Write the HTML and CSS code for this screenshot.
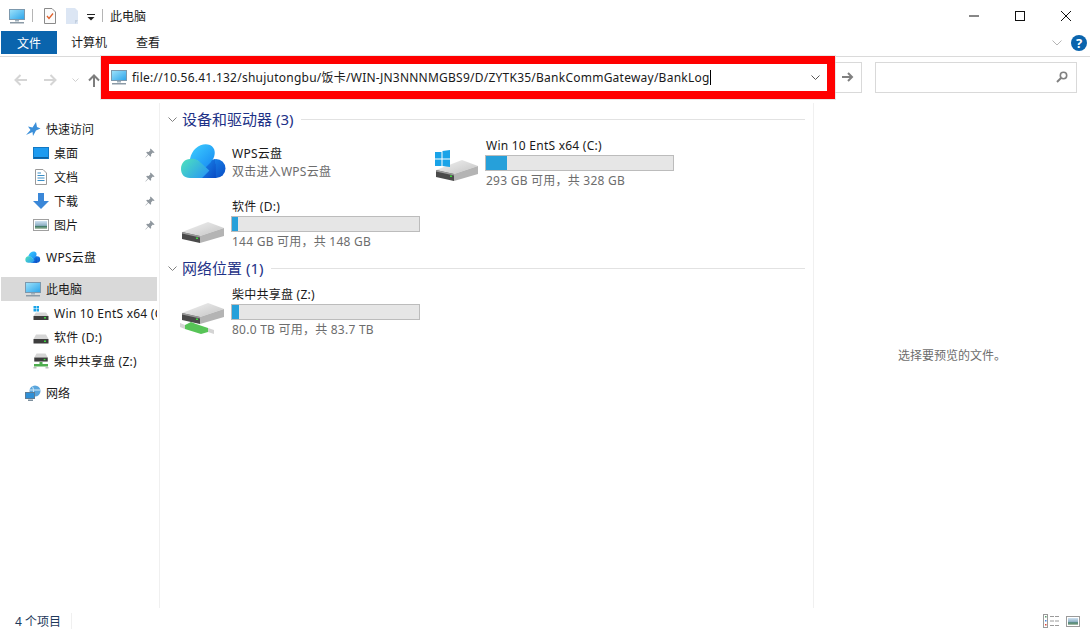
FILE: index.html
```html
<!DOCTYPE html>
<html lang="zh-CN">

<head>
    <meta charset="UTF-8">
    <meta name="viewport" content="width=device-width, initial-scale=1.0">
    <title>此电脑</title>
    <link rel="stylesheet" href="styles.css">
</head>

<body>

    <svg class="svg-defs" aria-hidden="true">
        <defs>
            <linearGradient id="screenGrad" x1="0" y1="0" x2="1" y2="1">
                <stop offset="0" stop-color="#9fe3fb" />
                <stop offset="1" stop-color="#2aa3ea" />
            </linearGradient>
            <linearGradient id="driveTop" x1="0" y1="0" x2="1" y2="1">
                <stop offset="0" stop-color="#f2f2f2" />
                <stop offset="1" stop-color="#c4c4c4" />
            </linearGradient>
            <linearGradient id="cloudTop" x1="0" y1="0" x2="1" y2="1">
                <stop offset="0" stop-color="#3fd0ff" />
                <stop offset="1" stop-color="#1688f2" />
            </linearGradient>
            <linearGradient id="cloudLeft" x1="0" y1="0" x2="1" y2="0.6">
                <stop offset="0" stop-color="#4fe3bb" />
                <stop offset="1" stop-color="#2a9cf0" />
            </linearGradient>
            <linearGradient id="cloudRight" x1="0" y1="0" x2="1" y2="1">
                <stop offset="0" stop-color="#1a8cf0" />
                <stop offset="1" stop-color="#0a4cc4" />
            </linearGradient>
            <linearGradient id="photoGrad" x1="0" y1="0" x2="0" y2="1">
                <stop offset="0" stop-color="#cfe2f2" />
                <stop offset="0.55" stop-color="#8fb0c4" />
                <stop offset="0.7" stop-color="#3f7a62" />
                <stop offset="1" stop-color="#b9c9b5" />
            </linearGradient>
        </defs>
        <symbol id="computer" viewBox="0 0 16 16">
            <rect x="0.500" y="1.500" width="15" height="10" fill="url(#screenGrad)" stroke="#7c98ad" />
            <rect x="6" y="12" width="4" height="1.500" fill="#9fb0bc" />
            <rect x="1" y="14" width="14" height="1.500" fill="#8b9aa6" />
        </symbol>
        <symbol id="pin" viewBox="0 0 10 10">
            <path d="M5.600 0.400 9.600 4.400 8.600 5 7.800 4.600 6 6.400 6.200 8 5.400 8.800 3.400 6.800 0.800 9.600 0.400 9.200 3 6.400 1.200 4.600 2 3.800 3.600 4 5.400 2.200 5 1.400Z" fill="#8f979e" />
        </symbol>
        <symbol id="cloud" viewBox="0 0 54 58">
            <circle cx="38" cy="34.500" r="9.500" fill="url(#cloudRight)" />
            <path d="M20 44 38 44 38 30 30 26Z" fill="url(#cloudRight)" />
            <path d="M12 25C14 14 24 8 32 11 38 14 38 21 34 27L27 34 20 27Z" fill="url(#cloudTop)" />
            <path d="M12 25C17 24 20 26 23 29L33 38 27 44 12 44C6 44 3 40 3 35 3 29 7 25 12 25Z" fill="url(#cloudLeft)" />
            <path d="M33 27 37 25 37 44 24 44 31 37C34 34 35 30 33 27Z" fill="url(#cloudRight)" />
        </symbol>
        <symbol id="drive" viewBox="0 0 54 58">
            <path d="M4 37 30 27 46 33 22 41Z" fill="url(#driveTop)" />
            <path d="M22 41 46 33 46 41 22 48Z" fill="#b4b4b4" />
            <path d="M4 37 22 41 22 48 4 44Z" fill="#4a4a4a" />
            <path d="M4 37 22 41 22 42.500 4 38.500Z" fill="#9a9a9a" />
            <rect x="18" y="42.500" width="2" height="1.500" fill="#3fd63f" />
        </symbol>
        <symbol id="driveSmall" viewBox="0 0 16 10">
            <path d="M3 0.500H13L15.500 5H0.500Z" fill="#d5d5d5" />
            <rect x="0.500" y="5" width="15" height="4.500" fill="#3d3d3d" />
            <rect x="11" y="6.500" width="2" height="1.500" fill="#3fd63f" />
        </symbol>
    </svg>

    <div class="window">

        <div class="titlebar">
            <svg class="qa-computer"><use href="#computer" /></svg>
            <span class="qa-sep"></span>
            <svg class="qa-doc" viewBox="0 0 12 16">
                <path d="M0.500 0.500H8L11.500 4V15.500H0.500Z" fill="#fbfbfb" stroke="#8a8a8a" />
                <path d="M3 8 5 10.500 9 5.500" fill="none" stroke="#e0602a" stroke-width="1.300" />
            </svg>
            <svg class="qa-blank" viewBox="0 0 12 16">
                <path d="M0 0H9L12 3V16H0Z" fill="#dce6f4" />
                <path d="M9 12H12L9 16Z" fill="#c3cfdf" />
            </svg>
            <svg class="qa-drop" viewBox="0 0 8 7">
                <rect x="0" y="0" width="8" height="1" fill="#222" />
                <path d="M0.500 3H7.500L4 6.500Z" fill="#222" />
            </svg>
            <span class="qa-sep qa-sep-2"></span>
            <span class="window-title">此电脑</span>
            <div class="winbtns">
                <svg viewBox="0 0 10 10"><path d="M0 5H10" stroke="#111" /></svg>
                <svg viewBox="0 0 10 10"><rect x="0.500" y="0.500" width="9" height="9" fill="none" stroke="#111" /></svg>
                <svg viewBox="0 0 10 10"><path d="M0 0 10 10M10 0 0 10" stroke="#111" /></svg>
            </div>
        </div>

        <div class="ribbon">
            <span class="tab tab-file">文件</span>
            <span class="tab tab-computer">计算机</span>
            <span class="tab tab-view">查看</span>
            <svg class="ribbon-chevron" viewBox="0 0 10 6"><path d="M0.500 0.500 5 5 9.500 0.500" fill="none" stroke="#b5b5b5" /></svg>
            <span class="help">?</span>
        </div>

        <div class="navbar">
            <svg class="nav-icon nav-back" viewBox="0 0 13 12"><path d="M13 6H1.500M6.500 1 1.500 6 6.500 11" fill="none" stroke="#d5d5d5" stroke-width="2" /></svg>
            <svg class="nav-icon nav-forward" viewBox="0 0 13 12"><path d="M0 6H11.500M6.500 1 11.500 6 6.500 11" fill="none" stroke="#d5d5d5" stroke-width="2" /></svg>
            <svg class="nav-icon nav-chevron" viewBox="0 0 7 4"><path d="M0.500 0.500 3.500 3.500 6.500 0.500" fill="none" stroke="#cfcfcf" /></svg>
            <svg class="nav-icon nav-up" viewBox="0 0 12 13"><path d="M6 13V1.500M1 6.500 6 1.500 11 6.500" fill="none" stroke="#7d7d7d" stroke-width="2" /></svg>

            <div class="address">
                <svg class="address-icon"><use href="#computer" /></svg>
                <span class="address-text">file://10.56.41.132/shujutongbu/饭卡/WIN-JN3NNNMGBS9/D/ZYTK35/BankCommGateway/BankLog</span>
                <span class="caret"></span>
                <svg class="address-drop" viewBox="0 0 9 5"><path d="M0.500 0.500 4.500 4.500 8.500 0.500" fill="none" stroke="#555" /></svg>
            </div>

            <div class="go">
                <svg viewBox="0 0 12 10"><path d="M0 5H10M6 1 10 5 6 9" fill="none" stroke="#808080" stroke-width="2" /></svg>
            </div>

            <div class="search">
                <svg viewBox="0 0 12 12">
                    <circle cx="7.500" cy="4.500" r="3.200" fill="none" stroke="#808080" stroke-width="1.600" />
                    <path d="M5 7 1 11" stroke="#808080" stroke-width="2" />
                </svg>
            </div>
        </div>

        <div class="body">

            <nav class="sidebar">
                <div class="side-group">
                    <div class="side-row">
                        <svg class="side-icon" viewBox="0 0 16 16"><path d="M11 1 12 6 15.500 7.500 11 9.500 8 15 7.500 11 1 14 5.500 9 3 5.500 7.500 6.500Z" fill="#3b8fd9" /></svg>
                        <span>快速访问</span>
                    </div>
                    <div class="side-row side-child">
                        <svg class="side-icon" viewBox="0 0 16 16">
                            <rect x="0.500" y="2.500" width="15" height="11" fill="#1e9bf0" stroke="#1278c4" />
                            <rect x="1" y="12" width="14" height="1.500" fill="#0d5f9e" />
                        </svg>
                        <span>桌面</span>
                        <svg class="pin"><use href="#pin" /></svg>
                    </div>
                    <div class="side-row side-child">
                        <svg class="side-icon" viewBox="0 0 16 16">
                            <path d="M2.500 0.500H10L13.500 4V15.500H2.500Z" fill="#fff" stroke="#9a9a9a" />
                            <path d="M4.500 4H8M4.500 6.500H11.500M4.500 9H11.500M4.500 11.500H11.500" stroke="#3a8fc8" />
                        </svg>
                        <span>文档</span>
                        <svg class="pin"><use href="#pin" /></svg>
                    </div>
                    <div class="side-row side-child">
                        <svg class="side-icon" viewBox="0 0 16 16"><path d="M5 0H11V8H16L8 16 0 8H5Z" fill="#3a87d8" /></svg>
                        <span>下载</span>
                        <svg class="pin"><use href="#pin" /></svg>
                    </div>
                    <div class="side-row side-child">
                        <svg class="side-icon" viewBox="0 0 16 16">
                            <rect x="0.500" y="2.500" width="15" height="11" fill="#fff" stroke="#a0a0a0" />
                            <rect x="2" y="4" width="12" height="8" fill="url(#photoGrad)" />
                        </svg>
                        <span>图片</span>
                        <svg class="pin"><use href="#pin" /></svg>
                    </div>
                </div>

                <div class="side-group">
                    <div class="side-row">
                        <svg class="side-icon" viewBox="2 6 48 42"><use href="#cloud" width="54" height="58" /></svg>
                        <span class="latin">WPS云盘</span>
                    </div>
                </div>

                <div class="side-group">
                    <div class="side-row side-active">
                        <svg class="side-icon"><use href="#computer" /></svg>
                        <span>此电脑</span>
                    </div>
                    <div class="side-row side-child">
                        <svg class="side-icon" viewBox="0 0 16 16">
                            <path d="M0.500 1H3V3.500H0.500ZM3.500 1H6V3.500H3.500ZM0.500 4H3V6.500H0.500ZM3.500 4H6V6.500H3.500Z" fill="#19a3e8" />
                            <path d="M3 7.500H13L15.500 11H0.500Z" fill="#d5d5d5" />
                            <rect x="0.500" y="11" width="15" height="4" fill="#3d3d3d" />
                            <rect x="11" y="12" width="2" height="1.500" fill="#3fd63f" />
                        </svg>
                        <span class="latin">Win 10 EntS x64 (C:)</span>
                    </div>
                    <div class="side-row side-child">
                        <svg class="side-icon" viewBox="0 -5 16 16"><use href="#driveSmall" width="16" height="10" /></svg>
                        <span class="latin">软件 (D:)</span>
                    </div>
                    <div class="side-row side-child">
                        <svg class="side-icon" viewBox="0 0 16 16">
                            <use href="#driveSmall" width="16" height="9" />
                            <path d="M6.500 9H9.500V11H15V13.500H1V11H6.500Z" fill="#4fae4f" />
                            <rect x="0.500" y="14" width="3" height="1.500" fill="#bdbdbd" />
                            <rect x="12.500" y="14" width="3" height="1.500" fill="#bdbdbd" />
                        </svg>
                        <span class="latin">柴中共享盘 (Z:)</span>
                    </div>
                </div>

                <div class="side-group">
                    <div class="side-row">
                        <svg class="side-icon" viewBox="0 0 16 16">
                            <circle cx="10" cy="6" r="5.500" fill="#5aa5dc" />
                            <path d="M7 1.500C9 3 9 8 7 10.500M5 5H15" fill="none" stroke="#d6ecf8" />
                            <rect x="0.500" y="7.500" width="9" height="6" fill="#2f8fd6" stroke="#5c7c96" />
                            <rect x="3" y="14.500" width="5" height="1.500" fill="#7d8f9d" />
                        </svg>
                        <span>网络</span>
                    </div>
                </div>
            </nav>

            <main class="content">
                <section class="group">
                    <div class="group-head">
                        <svg class="group-chevron" viewBox="0 0 9 5"><path d="M0.500 0.500 4.500 4.500 8.500 0.500" fill="none" stroke="#808080" /></svg>
                        <span class="group-title">设备和驱动器 (3)</span>
                        <span class="group-line"></span>
                    </div>
                    <div class="tiles">
                        <div class="tile">
                            <svg class="tile-icon"><use href="#cloud" /></svg>
                            <div class="tile-info tile-info-app">
                                <div class="tile-name">WPS云盘</div>
                                <div class="tile-sub">双击进入WPS云盘</div>
                            </div>
                        </div>
                        <div class="tile">
                            <svg class="tile-icon" viewBox="0 0 54 58">
                                <use href="#drive" width="54" height="58" y="-1" />
                                <path d="M3 18H9.500V24.500H3ZM10.500 17V24.500H18V16ZM3 25.500H9.500V32H3ZM10.500 25.500H18V33L10.500 32Z" fill="#19a3e8" />
                            </svg>
                            <div class="tile-info">
                                <div class="tile-name">Win 10 EntS x64 (C:)</div>
                                <div class="bar"><div class="bar-fill" style="width: 11%"></div></div>
                                <div class="tile-sub">293 GB 可用，共 328 GB</div>
                            </div>
                        </div>
                        <div class="tile">
                            <svg class="tile-icon"><use href="#drive" /></svg>
                            <div class="tile-info">
                                <div class="tile-name">软件 (D:)</div>
                                <div class="bar"><div class="bar-fill" style="width: 3%"></div></div>
                                <div class="tile-sub">144 GB 可用，共 148 GB</div>
                            </div>
                        </div>
                    </div>
                </section>

                <section class="group">
                    <div class="group-head">
                        <svg class="group-chevron" viewBox="0 0 9 5"><path d="M0.500 0.500 4.500 4.500 8.500 0.500" fill="none" stroke="#808080" /></svg>
                        <span class="group-title">网络位置 (1)</span>
                        <span class="group-line"></span>
                    </div>
                    <div class="tiles">
                        <div class="tile">
                            <svg class="tile-icon" viewBox="0 0 54 58">
                                <use href="#drive" width="54" height="58" y="-7" />
                                <path d="M2 40 7 42 7 46 2 44ZM30 45 36 47 36 51 30 49Z" fill="#d4d4d4" />
                                <path d="M7 42 13 39 18 41 30 45 30 49 23 51 7 46Z" fill="#57c457" />
                            </svg>
                            <div class="tile-info">
                                <div class="tile-name">柴中共享盘 (Z:)</div>
                                <div class="bar"><div class="bar-fill" style="width: 4%"></div></div>
                                <div class="tile-sub">80.0 TB 可用，共 83.7 TB</div>
                            </div>
                        </div>
                    </div>
                </section>
            </main>

            <aside class="preview">选择要预览的文件。</aside>
        </div>

        <div class="statusbar">
            <span class="status-count">4 个项目</span>
            <span class="status-sep"></span>
            <svg class="status-details" viewBox="0 0 16 14">
                <rect x="0.500" y="0.500" width="4" height="13" fill="#fff" stroke="#9a9a9a" />
                <rect x="2" y="2" width="1.500" height="1.500" fill="#5a9a6a" />
                <rect x="2" y="6" width="1.500" height="1.500" fill="#4a8ae0" />
                <rect x="2" y="10" width="1.500" height="1.500" fill="#e04a3a" />
                <path d="M7 2.500H11M12 2.500H16M7 7H11M12 7H16M7 11.500H11M12 11.500H16" stroke="#9a9a9a" />
            </svg>
            <svg class="status-tiles" viewBox="0 0 14 11">
                <rect x="0.500" y="0.500" width="13" height="10" fill="#fff" stroke="#9a9a9a" />
                <rect x="2" y="2" width="10" height="7" fill="url(#photoGrad)" />
            </svg>
        </div>

    </div>

</body>

</html>
```

FILE: styles.css
```css
* {
    box-sizing: border-box;
}

html,
body {
    height: 100%;
}

body {
    margin: 0;
    background-color: #fff;
    color: #1a1a1a;
    font-family: "Noto Sans", "Noto Sans CJK SC", sans-serif;
    font-size: 12px;
    overflow: hidden;
}

svg {
    display: block;
    flex: none;
}

.svg-defs {
    position: absolute;
    width: 0;
    height: 0;
}

.window {
    display: flex;
    flex-direction: column;
    height: 100%;
}

/* title bar */

.titlebar {
    display: flex;
    align-items: center;
    height: 31px;
    flex: none;
    padding-left: 9px;
}

.qa-computer {
    width: 16px;
    height: 16px;
}

.qa-sep {
    width: 1px;
    height: 13px;
    margin-left: 7px;
    background-color: #b5b5b5;
}

.qa-doc {
    width: 12px;
    height: 16px;
    margin-left: 11px;
}

.qa-blank {
    width: 12px;
    height: 16px;
    margin-left: 10px;
}

.qa-drop {
    width: 8px;
    height: 7px;
    margin-left: 9px;
    margin-top: 3px;
}

.qa-sep-2 {
    margin-left: 7px;
}

.window-title {
    margin-left: 7px;
}

.winbtns {
    display: flex;
    gap: 36px;
    margin-left: auto;
    padding-right: 19px;
}

.winbtns svg {
    width: 10px;
    height: 10px;
}

/* ribbon tabs */

.ribbon {
    display: flex;
    align-items: center;
    height: 26px;
    flex: none;
    border-bottom: 1px solid #dadada;
    padding-bottom: 2px;
}

.tab {
    line-height: 25px;
}

.tab-file {
    width: 56px;
    height: 23px;
    margin-left: 1px;
    background-color: #0a64ad;
    color: #fff;
    text-align: center;
}

.tab-computer {
    margin-left: 14px;
}

.tab-view {
    margin-left: 29px;
}

.ribbon-chevron {
    width: 10px;
    height: 6px;
    margin-left: auto;
}

.help {
    width: 16px;
    height: 16px;
    margin: 0 3px 0 9px;
    border-radius: 50%;
    background-color: #0a64ad;
    color: #fff;
    font-size: 13px;
    font-weight: bold;
    line-height: 16px;
    text-align: center;
}

/* address row */

.navbar {
    display: flex;
    align-items: center;
    height: 47px;
    flex: none;
    padding: 0 0 5px 14px;
    margin-top: -1px;
}

.nav-icon {
    width: 13px;
    height: 12px;
    margin-top: 6px;
}

.nav-forward {
    margin-left: 17px;
}

.nav-chevron {
    width: 7px;
    height: 4px;
    margin-left: 15px;
}

.nav-up {
    width: 12px;
    height: 13px;
    margin-left: 9px;
}

.address {
    display: flex;
    align-items: center;
    width: 734px;
    height: 43px;
    margin-left: 1px;
    border: 8px solid #f00;
    outline: 1px solid #e8e8e8;
    padding-left: 2px;
}

.address-icon {
    width: 16px;
    height: 16px;
}

.address-text {
    margin-left: 5px;
    letter-spacing: 0.24px;
    white-space: nowrap;
}

.caret {
    width: 1px;
    height: 15px;
    background-color: #000;
}

.address-drop {
    width: 9px;
    height: 5px;
    margin-left: auto;
    margin-right: 7px;
}

.go {
    display: flex;
    align-items: center;
    justify-content: center;
    width: 27px;
    height: 31px;
    border: 1px solid #d9d9d9;
    border-left: none;
}

.go svg {
    width: 12px;
    height: 10px;
}

.search {
    display: flex;
    align-items: center;
    justify-content: flex-end;
    width: 202px;
    height: 31px;
    margin-left: 13px;
    border: 1px solid #d9d9d9;
    padding-right: 8px;
}

.search svg {
    width: 12px;
    height: 12px;
}

/* body panes */

.body {
    display: flex;
    flex: 1;
    min-height: 0;
}

.sidebar {
    width: 160px;
    flex: none;
    padding-top: 14px;
    border-right: 1px solid #f0f0f0;
}

.side-group {
    margin-bottom: 8px;
}

.side-row {
    display: flex;
    align-items: center;
    width: 156px;
    height: 24px;
    margin-left: 1px;
    padding-left: 24px;
    white-space: nowrap;
    overflow: hidden;
}

.side-child {
    padding-left: 32px;
}

.side-active {
    background-color: #d9d9d9;
}

.side-icon {
    width: 16px;
    height: 16px;
    margin-right: 5px;
}

.latin {
    letter-spacing: 0.24px;
}

.pin {
    width: 10px;
    height: 10px;
    margin-left: auto;
    margin-right: 2px;
}

.content {
    width: 654px;
    flex: none;
    padding: 1px 8px 0 8px;
    border-right: 1px solid #f0f0f0;
}

.group-head {
    display: flex;
    align-items: center;
    height: 30px;
}

.group-chevron {
    width: 9px;
    height: 5px;
    margin-right: 5px;
}

.group-title {
    margin-top: -2px;
    color: #1e3287;
    font-size: 15px;
}

.group-line {
    flex: 1;
    height: 1px;
    margin-left: 8px;
    background-color: #e2e2e2;
}

.tiles {
    display: grid;
    grid-template-columns: 254px 254px;
    row-gap: 3px;
    padding-left: 10px;
}

.tile {
    display: flex;
    height: 58px;
}

.tile-icon {
    width: 54px;
    height: 58px;
}

.tile-info {
    padding-top: 3px;
    letter-spacing: 0.24px;
}

.tile-name {
    line-height: 18px;
    white-space: nowrap;
}

.tile-info-app {
    padding-top: 11px;
}

.tile-info-app .tile-sub {
    margin-top: 1px;
}

.tile-sub {
    margin-top: 2px;
    color: #6d6d6d;
    line-height: 16px;
    white-space: nowrap;
}

.bar {
    width: 189px;
    height: 16px;
    margin-left: -1px;
    background-color: #e6e6e6;
    border: 1px solid #bcbcbc;
}

.bar-fill {
    height: 100%;
    background-color: #26a0da;
}

.preview {
    flex: 1;
    padding-top: 243px;
    color: #6d6d6d;
    text-align: center;
}

/* status bar */

.statusbar {
    display: flex;
    align-items: center;
    height: 26px;
    flex: none;
    padding: 0 10px 0 15px;
    color: #1e395b;
}

.status-sep {
    width: 1px;
    height: 16px;
    margin-left: 10px;
    background-color: #f0f0f0;
}

.status-details {
    width: 16px;
    height: 14px;
    margin-left: auto;
}

.status-tiles {
    width: 14px;
    height: 11px;
    margin-left: 7px;
}
```
